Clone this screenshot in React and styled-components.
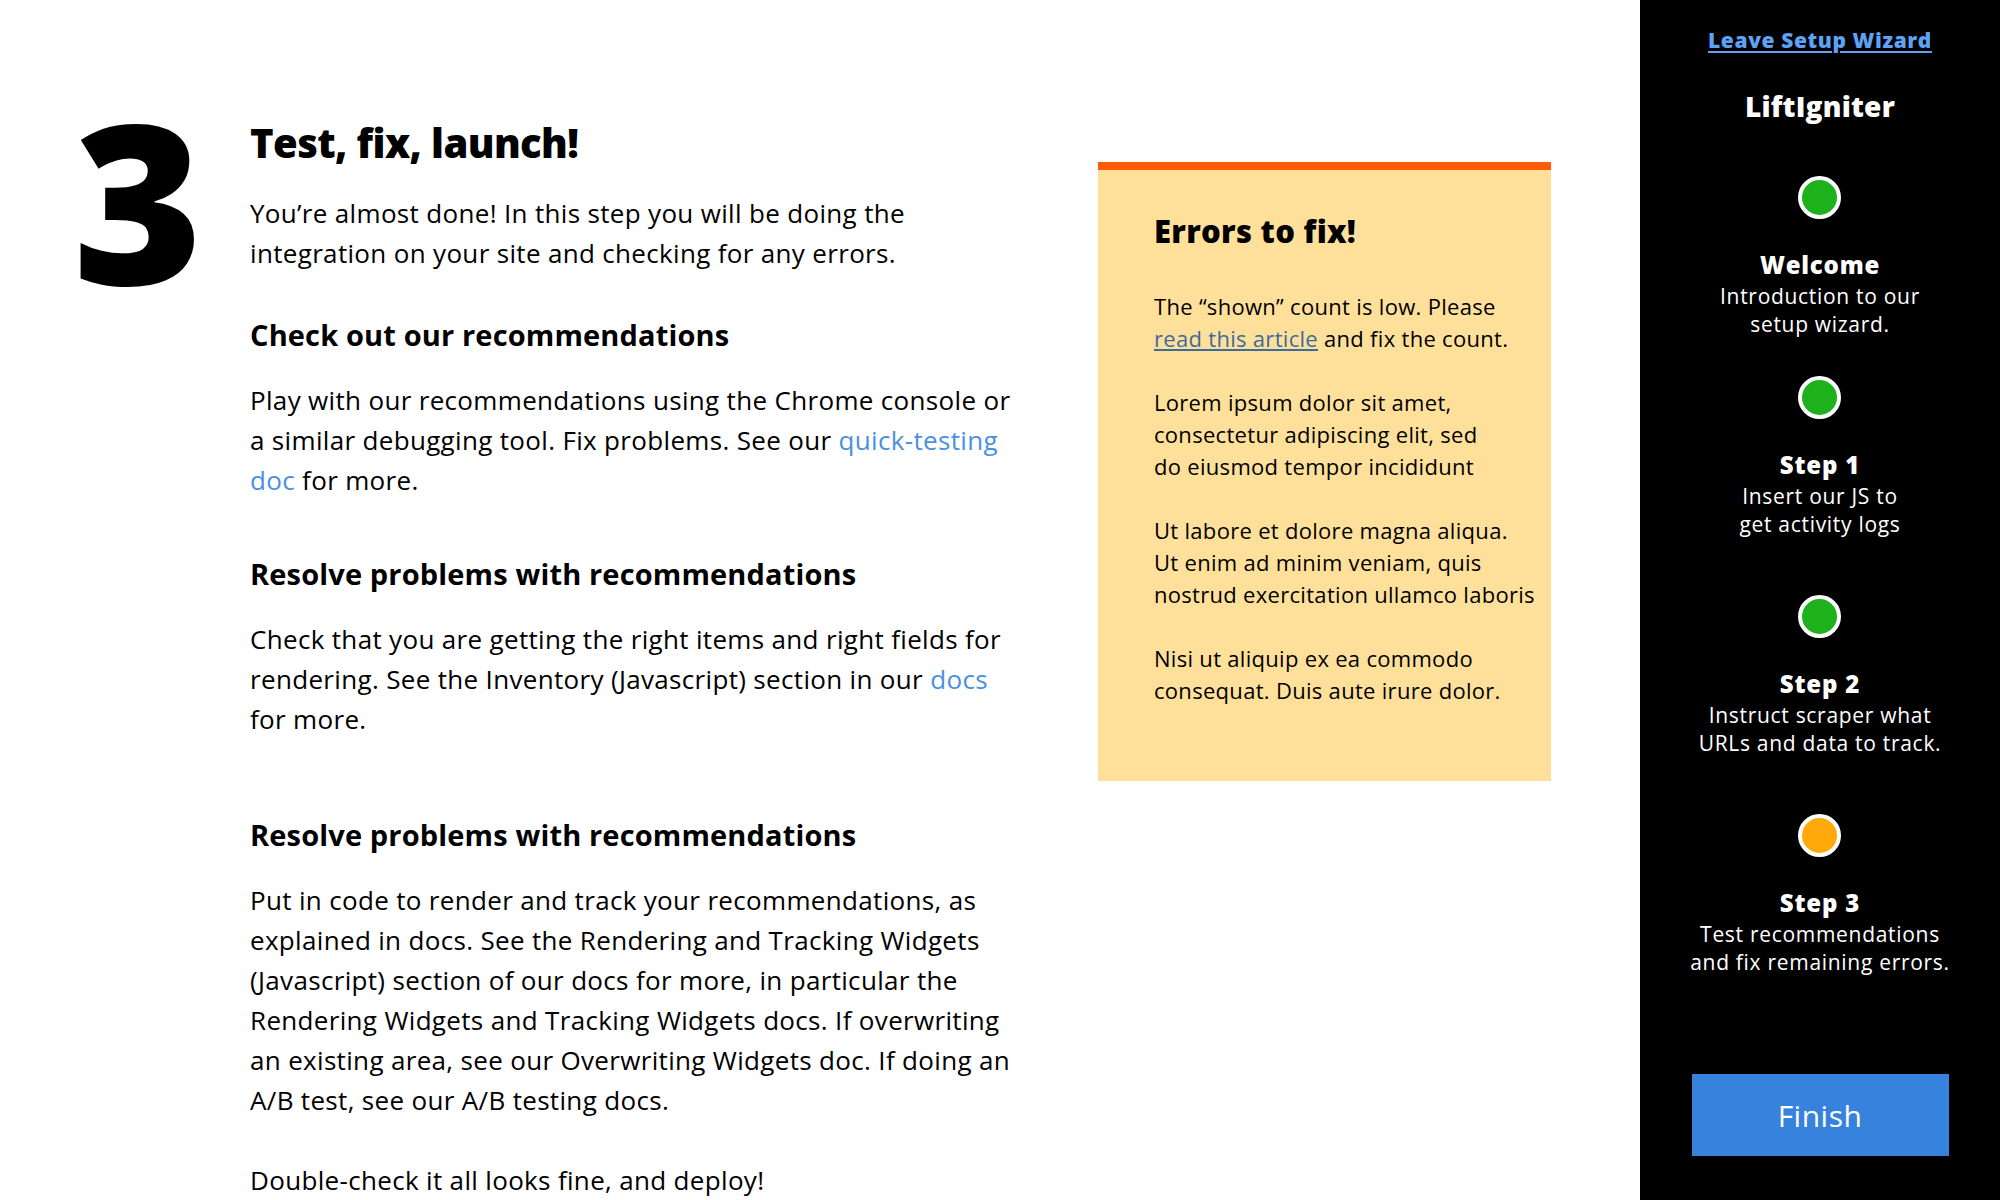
import React from "react";
import styled, { createGlobalStyle } from "styled-components";

const GlobalStyle = createGlobalStyle`
  html, body {
    margin: 0;
    padding: 0;
  }
  body {
    font-family: "Open Sans", Lato, Arial, sans-serif;
    color: #000;
    background: #fff;
  }
`;

//레이아웃
const Page = styled.div`
  display: flex;
  width: 2000px;
  height: 1200px;
  overflow: hidden;
`;

const Main = styled.main`
  flex: 1;
  display: flex;
  align-items: flex-start;
  padding: 88px 0 0 73px;
`;

const StepNumber = styled.div`
  flex-shrink: 0;
  width: 177px;
  font-size: 222px;
  font-weight: 800;
  line-height: 1;
`;

const Content = styled.div`
  flex-shrink: 0;
  width: 776px;
  padding-top: 30px;
`;

const Title = styled.h1`
  margin: 0;
  font-size: 40px;
  font-weight: 800;
  line-height: 50px;
  letter-spacing: -0.6px;
`;

const Text = styled.p`
  margin: ${(props) => props.$top || 25}px 0 0;
  font-size: 26px;
  line-height: 40px;
  letter-spacing: 0.33px;
`;

const Section = styled.section`
  margin-top: ${(props) => props.$top}px;
`;

const SectionTitle = styled.h3`
  margin: 0;
  font-size: 29px;
  font-weight: 700;
  line-height: 40px;
  letter-spacing: 0.15px;
`;

const DocLink = styled.a`
  color: #4a90e2;
  text-decoration: none;
`;

//에러 박스
const ErrorPanel = styled.aside`
  flex-shrink: 0;
  width: 453px;
  box-sizing: border-box;
  margin: 74px 0 0 72px;
  padding: 41px 10px 75px 56px;
  background: #ffe09b;
  border-top: 8px solid #ff5a06;
`;

const ErrorTitle = styled.h2`
  margin: 0 0 39px;
  font-size: 31px;
  font-weight: 800;
  line-height: 40px;
  letter-spacing: 0.3px;
`;

const ErrorText = styled.p`
  margin: 0 0 32px;
  font-size: 22px;
  line-height: 32px;
  letter-spacing: 0.3px;

  &:last-child {
    margin-bottom: 0;
  }
`;

const ArticleLink = styled.a`
  color: #3c6b9c;
  text-decoration: underline;
`;

//사이드바
const Sidebar = styled.nav`
  flex-shrink: 0;
  width: 360px;
  box-sizing: border-box;
  display: flex;
  flex-direction: column;
  align-items: center;
  padding: 26px 0 44px;
  background: #000;
  color: #fff;
  text-align: center;
`;

const LeaveLink = styled.a`
  color: #5ea2f5;
  font-size: 21px;
  font-weight: 800;
  line-height: 28px;
  letter-spacing: 0.6px;
  text-decoration: underline;
  text-underline-offset: 3px;
`;

const Brand = styled.div`
  margin-top: 34px;
  font-size: 28px;
  font-weight: 800;
  line-height: 36px;
  letter-spacing: 0.2px;
`;

const Steps = styled.div`
  display: flex;
  flex-direction: column;
  align-items: center;
  margin-top: 52px;
`;

const Step = styled.div`
  display: flex;
  flex-direction: column;
  align-items: center;
  margin-bottom: ${(props) => props.$space}px;
`;

const Dot = styled.span`
  width: 43px;
  height: 43px;
  box-sizing: border-box;
  border: 4px solid #fff;
  border-radius: 50%;
  background: ${(props) => (props.$current ? "#ffa90a" : "#1db11b")};
`;

const StepName = styled.div`
  margin-top: 32px;
  font-size: 24px;
  font-weight: 800;
  line-height: 28px;
  letter-spacing: 0.8px;
`;

const StepDesc = styled.div`
  margin-top: 3px;
  font-size: 21px;
  line-height: 28px;
  letter-spacing: 0.7px;
`;

const FinishButton = styled.button`
  margin-top: auto;
  width: 257px;
  height: 82px;
  border: none;
  background: #3682dc;
  color: #fff;
  font-family: inherit;
  font-size: 30px;
  letter-spacing: 0.5px;
  cursor: pointer;
`;

const steps = [
  { name: "Welcome", desc: ["Introduction to our", "setup wizard."], space: 38 },
  { name: "Step 1", desc: ["Insert our JS to", "get activity logs"], space: 57 },
  { name: "Step 2", desc: ["Instruct scraper what", "URLs and data to track."], space: 57 },
  { name: "Step 3", desc: ["Test recommendations", "and fix remaining errors."], current: true, space: 0 },
];

function App() {
  return (
    <Page>
      <GlobalStyle />
      <Main>
        <StepNumber>3</StepNumber>

        <Content>
          <Title>Test, fix, launch!</Title>
          <Text>
            You’re almost done! In this step you will be doing the integration
            on your site and checking for any errors.
          </Text>

          <Section $top={42}>
            <SectionTitle>Check out our recommendations</SectionTitle>
            <Text>
              Play with our recommendations using the Chrome console or a
              similar debugging tool. Fix problems. See our{" "}
              <DocLink href="#">quick-testing doc</DocLink> for more.
            </Text>
          </Section>

          <Section $top={54}>
            <SectionTitle>Resolve problems with recommendations</SectionTitle>
            <Text>
              Check that you are getting the right items and right fields for
              rendering. See the Inventory (Javascript) section in our{" "}
              <DocLink href="#">docs</DocLink> for more.
            </Text>
          </Section>

          <Section $top={76}>
            <SectionTitle>Resolve problems with recommendations</SectionTitle>
            <Text>
              Put in code to render and track your recommendations, as
              explained in docs. See the Rendering and Tracking Widgets
              (Javascript) section of our docs for more, in particular the
              Rendering Widgets and Tracking Widgets docs. If overwriting an
              existing area, see our Overwriting Widgets doc. If doing an A/B
              test, see our A/B testing docs.
            </Text>
            <Text $top={40}>Double-check it all looks fine, and deploy!</Text>
          </Section>
        </Content>

        <ErrorPanel>
          <ErrorTitle>Errors to fix!</ErrorTitle>
          <ErrorText>
            The “shown” count is low. Please
            <br />
            <ArticleLink href="#">read this article</ArticleLink> and fix the
            count.
          </ErrorText>
          <ErrorText>
            Lorem ipsum dolor sit amet,
            <br />
            consectetur adipiscing elit, sed
            <br />
            do eiusmod tempor incididunt
          </ErrorText>
          <ErrorText>
            Ut labore et dolore magna aliqua.
            <br />
            Ut enim ad minim veniam, quis
            <br />
            nostrud exercitation ullamco laboris
          </ErrorText>
          <ErrorText>
            Nisi ut aliquip ex ea commodo
            <br />
            consequat. Duis aute irure dolor.
          </ErrorText>
        </ErrorPanel>
      </Main>

      <Sidebar>
        <LeaveLink href="#">Leave Setup Wizard</LeaveLink>
        <Brand>LiftIgniter</Brand>

        <Steps>
          {steps.map((step) => (
            <Step key={step.name} $space={step.space}>
              <Dot $current={step.current} />
              <StepName>{step.name}</StepName>
              <StepDesc>
                {step.desc[0]}
                <br />
                {step.desc[1]}
              </StepDesc>
            </Step>
          ))}
        </Steps>

        <FinishButton>Finish</FinishButton>
      </Sidebar>
    </Page>
  );
}

export default App;
